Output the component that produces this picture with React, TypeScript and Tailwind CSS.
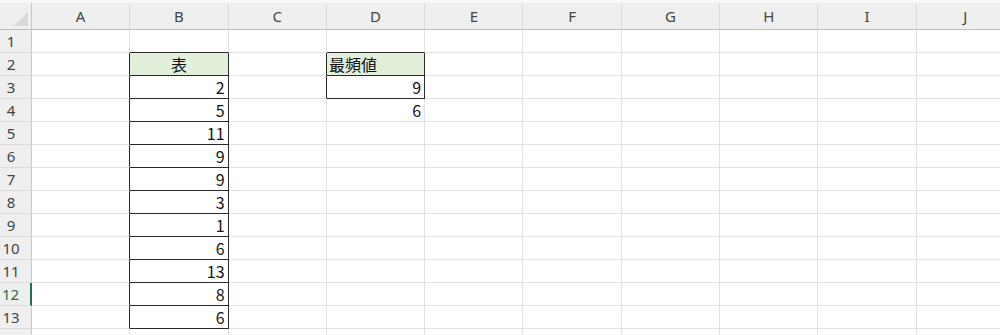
import React from 'react';

const cols = ['A', 'B', 'C', 'D', 'E', 'F', 'G', 'H', 'I', 'J'];
const rows = Array.from({ length: 14 }, (_, i) => i + 1);

const tableB: Record<number, string> = {
  2: '表', 3: '2', 4: '5', 5: '11', 6: '9', 7: '9', 8: '3', 9: '1', 10: '6', 11: '13', 12: '8', 13: '6',
};
const tableD: Record<number, string> = { 2: '最頻値', 3: '9', 4: '6' };

const cellFont = { fontFamily: '"Noto Sans CJK JP", "Noto Sans", sans-serif' };

// which cells get the thin black table border on their right / bottom edge
const blackRight = (c: number, r: number) =>
  ((c === 0 || c === 1) && r >= 2 && r <= 13) || ((c === 2 || c === 3) && r >= 2 && r <= 3);
const blackBottom = (c: number, r: number) =>
  (c === 1 && r >= 1 && r <= 13) || (c === 3 && r >= 1 && r <= 3);

const Cell: React.FC<{ c: number; r: number }> = ({ c, r }) => {
  const right = blackRight(c, r) ? 'border-r-[#2b2b2b]' : 'border-r-[#e1e1e1]';
  const bottom = blackBottom(c, r) ? 'border-b-[#2b2b2b]' : 'border-b-[#e1e1e1]';
  const isHead = r === 2 && (c === 1 || c === 3);
  const bg = isHead ? 'bg-[#e2efda]' : 'bg-white';
  let text = '';
  let align = 'justify-end pr-[3px]';
  if (c === 1 && tableB[r]) text = tableB[r];
  if (c === 3 && tableD[r]) text = tableD[r];
  if (c === 1 && r === 2) align = 'justify-center';
  if (c === 3 && r === 2) align = 'justify-start pl-[2px]';
  return (
    <div
      className={`flex items-center border-r border-b ${right} ${bottom} ${bg} ${align} text-[16px] leading-none text-[#111]`}
      style={cellFont}
    >
      {text}
    </div>
  );
};

export default function App() {
  return (
    <div className="w-[1000px] h-[335px] overflow-hidden bg-white" style={{ fontFamily: '"Noto Sans", "Open Sans", sans-serif' }}>
      <div className="h-[3px] bg-[#f7f7f7]" />
      <div className="grid grid-cols-[32px_repeat(10,98.3px)] grid-rows-[27px_repeat(14,23px)] w-[1015px]">
        {/* corner */}
        <div className="relative bg-[#efefef] border-r border-b border-r-[#c8c8c8] border-b-[#bdbdbd]">
          <svg className="absolute right-[3px] bottom-[3px]" width="14" height="14" viewBox="0 0 14 14">
            <polygon points="14,0 14,14 0,14" fill="#d8d8d8" />
          </svg>
        </div>
        {cols.map((col) => (
          <div
            key={col}
            className="flex items-center justify-center bg-[#efefef] border-r border-b border-r-[#dadada] border-b-[#bdbdbd] text-[15px] text-[#444] pt-[1px]"
          >
            {col}
          </div>
        ))}
        {rows.map((r) => (
          <React.Fragment key={r}>
            <div
              className={`flex items-center justify-center pr-[9px] bg-[#efefef] border-b border-b-[#dadada] text-[15px] ${
                r === 12 ? 'text-[#217346] border-r-2 border-r-[#217346]' : 'text-[#444] border-r border-r-[#c8c8c8]'
              }`}
            >
              {r < 14 ? r : ''}
            </div>
            {cols.map((_, c) => (
              <Cell key={c} c={c} r={r} />
            ))}
          </React.Fragment>
        ))}
      </div>
    </div>
  );
}
